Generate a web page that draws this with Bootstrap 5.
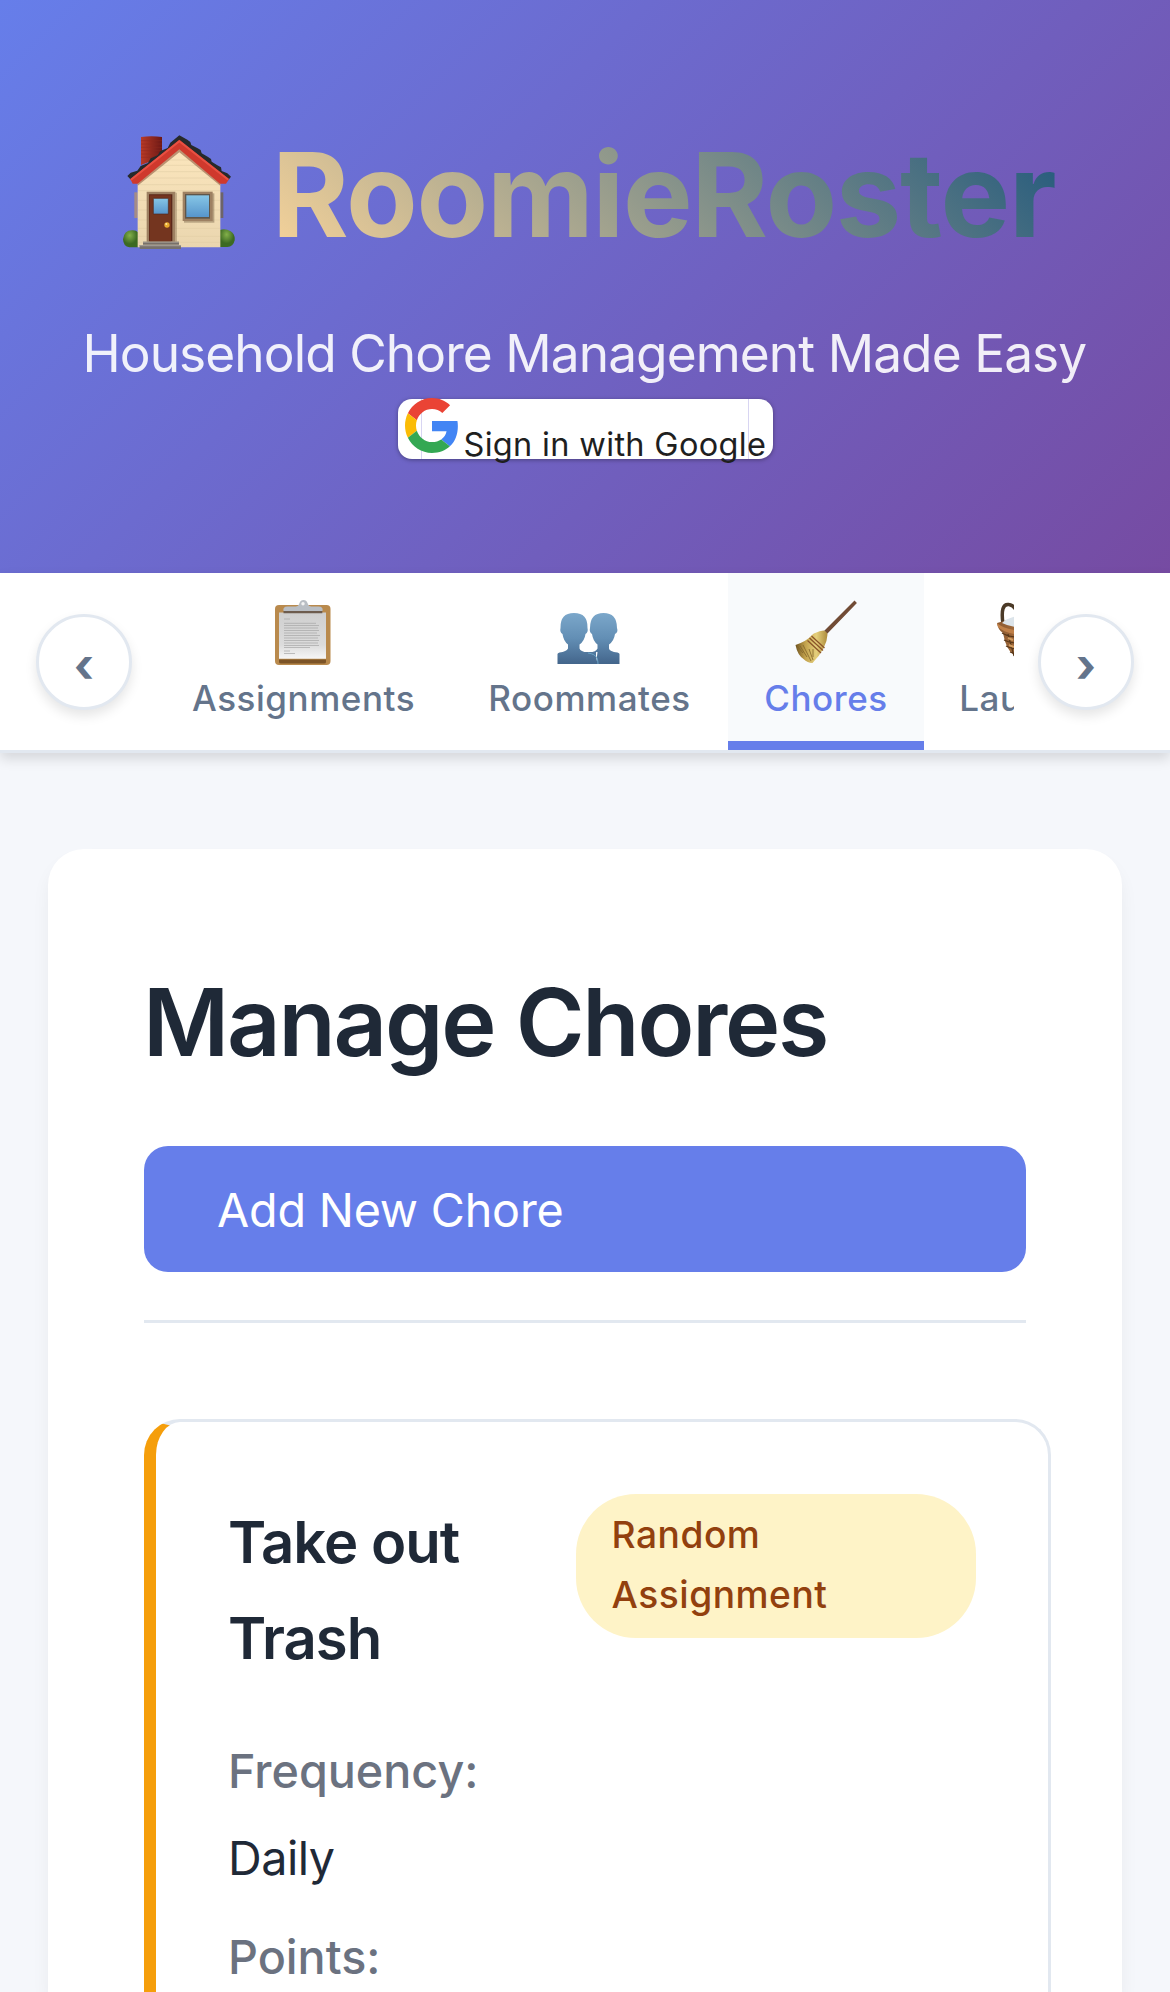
<!DOCTYPE html>
<html lang="en">
<head>
<meta charset="utf-8">
<meta name="viewport" content="width=device-width, initial-scale=1">
<title>RoomieRoster</title>
<link href="https://cdn.jsdelivr.net/npm/bootstrap@5.3.0/dist/css/bootstrap.min.css" rel="stylesheet">
<style>
html, body { height: 1992px; overflow: hidden; }
body { background: #f5f7fb; color: #1f2937; font-family: Inter, "Liberation Sans", sans-serif; font-size: 46.7px; line-height: 76px; }
.app-header { height: 573px; padding-top: 99px; background: linear-gradient(135deg, #667eea 0%, #764ba2 100%); }
.brand { gap: 37px; padding-left: 123px; font-size: 117px; font-weight: 700; line-height: 192px; letter-spacing: -1.3px; white-space: nowrap; }
.brand svg { width: 112px; height: 114px; margin-top: -6px; }
.brand-name { background: linear-gradient(45deg, #ffd89b, #19547b); -webkit-background-clip: text; background-clip: text; color: transparent; }
.tagline { margin-top: 20px; padding-left: 82.5px; font-size: 51.4px; line-height: 84px; letter-spacing: -.93px; color: rgba(255,255,255,.9); white-space: nowrap; }
.signin { width: 375px; height: 60px; margin: 4px 0 0 397.5px; padding-left: 7px; border-radius: 14px; background: linear-gradient(#d8d5f2,#d8d5f2) 23.5px 0/1px 100% no-repeat, linear-gradient(#d8d5f2,#d8d5f2) 350.5px 0/1px 100% no-repeat, #fff; box-shadow: 0 1px 4px rgba(0,0,0,.35); color: #1f1f1f; font-size: 32.5px; line-height: 40px; letter-spacing: .32px; white-space: nowrap; }
.signin svg { width: 54px; height: 55px; margin-top: -1px; flex: none; }
.signin span { margin: 26px 0 0 5px; }
.tabbar { height: 180px; padding: 0 36px; background: #fff; border-bottom: 3px solid #e2e8f0; box-shadow: 0 6px 12px rgba(0,0,0,.13); }
.scroll-btn { width: 96px; height: 96px; flex: none; margin-top: 41px; padding: 6px 0 0; border: 3px solid #e2e8f0; border-radius: 50%; background: #fff; color: #64748b; font-size: 47px; font-weight: 700; line-height: 84px; text-align: center; box-shadow: 0 6px 12px rgba(0,0,0,.1); }
.tabs { width: 858px; margin: 0 24px; overflow: hidden; flex: none; }
.tab-item { flex: none; height: 177px; padding-top: 27px; border-bottom: 9px solid transparent; color: #64748b; font-size: 35px; font-weight: 500; line-height: 50px; letter-spacing: .55px; text-decoration: none; }
.tab-item svg { width: 66px; height: 66px; margin: 0 2px 7px 0; }
.tab-item.current { background: #f8fafc; border-color: #667eea; color: #667eea; }
.page { padding: 96px 48px; }
.panel { height: 1143px; padding: 96px; border-radius: 36px 36px 0 0; background: #fff; box-shadow: 0 12px 18px rgba(0,0,0,.05); }
.panel h2 { margin: 0 0 47px -1px; font-size: 93.5px; font-weight: 600; line-height: 154px; letter-spacing: -2.21px; }
.add-btn { width: 882px; height: 126px; padding: 2px 73px 0; border-radius: 24px; background: #667eea; color: #fff; letter-spacing: -.2px; }
.rule { height: 3px; margin: 48px 0 96px; background: #e2e8f0; }
.chore { width: 907px; height: 573px; padding: 72px 72px 0; border: 3px solid #e2e8f0; border-left: 12px solid #f59e0b; border-bottom: 0; border-radius: 36px 36px 0 0; }
.chore h3 { width: 280px; margin: 0; font-size: 58px; font-weight: 600; line-height: 96px; letter-spacing: -1px; }
.kind { width: 400px; height: 144px; padding: 11px 35.5px; border-radius: 60px; background: #fef3c7; color: #92400e; font-size: 37.2px; font-weight: 500; line-height: 60px; letter-spacing: .5px; }
.label-text { color: #6b7280; font-weight: 500; }
</style>
<script src="https://cdn.jsdelivr.net/npm/bootstrap@5.3.0/dist/js/bootstrap.bundle.min.js"></script>
</head>
<body>
<header class="app-header">
  <h1 class="brand d-flex align-items-center m-0">
    <svg viewBox="39 45 336 342" aria-hidden="true">
      <defs>
        <linearGradient id="wall" x2="0" y2="1"><stop stop-color="#fce6bd"/><stop offset="1" stop-color="#ead6af"/></linearGradient>
        <linearGradient id="brick"><stop stop-color="#b93a27"/><stop offset="1" stop-color="#6c1815"/></linearGradient>
        <linearGradient id="glass" x2="0" y2="1"><stop stop-color="#86c6e6"/><stop offset="1" stop-color="#5795cb"/></linearGradient>
        <radialGradient id="bush" cx=".45" cy=".3"><stop stop-color="#83b04a"/><stop offset="1" stop-color="#3c6a22"/></radialGradient>
      </defs>
      <path d="M39 358q3-27 27-27 12-1 18 6v45H58q-18-2-19-24z" fill="url(#bush)"/>
      <path d="M330 330q16-6 32 4 14 10 12 27-4 20-22 20h-22z" fill="url(#bush)"/>
      <path d="M73 217h10v77H73z" fill="#a58c86"/><path d="M331 217h9v77h-9z" fill="#6d6468"/>
      <path d="M93 51q32-4 63 0v60l-63 24z" fill="url(#brick)"/>
      <path d="M93 62h63M93 72h63M93 82h63M93 92h63M93 102h60M93 112h50" stroke="#8e2a1f" stroke-width="1.5"/>
      <path d="M83 382V170L208 75l123 95v212z" fill="url(#wall)"/>
      <path d="M170 120h80M150 136h116M125 155h165M105 174h205M84 194h246M84 212h246M84 241h246M84 270h246M84 300h246M84 325h246M84 349h246M84 367h246" stroke="#dfcaa3" stroke-width="1.5"/>
      <path d="M83 197L208 97l123 100v-22L208 80 83 175z" fill="#9a674c" opacity=".65"/>
      <path d="M52 168L62 158 82 152 92 138 114 129 122 115 143 106 151 93 173 84 181 68 208 46 232 59 241 66 244 75 263 85 272 90 275 100 293 110 303 117 305 125 322 136 333 142 335 153 352 160 363 170 352 184 208 70 66 183z" fill="#272a2b"/>
      <path d="M61 177L208 59 357 177 348 191 330 191 208 88 83 191H68z" fill="#cf392d"/>
      <path d="M62 180L208 64l147 115" fill="none" stroke="#e95042" stroke-width="6"/>
      <path d="M110 215h86v150h-86z" fill="#9d8062"/><path d="M196 218h5v147h-5z" fill="#9c8666" opacity=".5"/><path d="M117 223h70v141h-70z" fill="#5b2719"/><path d="M119 226h64v138h-64z" fill="#74351f"/>
      <path d="M130 235h45v47h-45z" fill="url(#glass)" stroke="#4e291e" stroke-width="2"/><circle cx="171" cy="315" r="8" fill="#e9aa2f"/><circle cx="169" cy="312" r="3" fill="#ffe69a"/>
      <path d="M222 220h91v88h-91z" fill="#80694e" opacity=".5"/><path d="M218 215h90v88h-90z" fill="#9d8062"/><path d="M225 222h75v74h-75z" fill="#5f564a"/><path d="M229 226h68v65h-68z" fill="url(#glass)"/>
      <path d="M99 365h108v9H99z" fill="#77706a"/><path d="M99 365h108v3H99z" fill="#a29b90"/><path d="M89 375h124v12H89z" fill="#77716c"/><path d="M89 375h124v4H89z" fill="#9e9992"/>
    </svg>
    <span class="brand-name">RoomieRoster</span>
  </h1>
  <p class="tagline mb-0">Household Chore Management Made Easy</p>
  <div class="signin d-flex align-items-start">
    <svg viewBox="0 0 48 48" preserveAspectRatio="none" aria-hidden="true">
      <path fill="#EA4335" d="M24 9.5c3.54 0 6.71 1.22 9.21 3.6l6.85-6.85C35.9 2.38 30.47 0 24 0 14.62 0 6.51 5.38 2.56 13.22l7.98 6.19C12.43 13.72 17.74 9.5 24 9.5z"/>
      <path fill="#4285F4" d="M46.98 24.55c0-1.57-.15-3.09-.38-4.55H24v9.02h12.94c-.58 2.96-2.26 5.48-4.78 7.18l7.73 6c4.51-4.18 7.09-10.36 7.09-17.65z"/>
      <path fill="#FBBC05" d="M10.53 28.59c-.48-1.45-.76-2.99-.76-4.59s.27-3.14.76-4.59l-7.98-6.19C.92 16.46 0 20.12 0 24c0 3.88.92 7.54 2.56 10.78l7.97-6.19z"/>
      <path fill="#34A853" d="M24 48c6.48 0 11.93-2.13 15.89-5.81l-7.73-6c-2.15 1.45-4.92 2.3-8.16 2.3-6.26 0-11.57-4.22-13.47-9.91l-7.98 6.19C6.51 42.62 14.62 48 24 48z"/>
    </svg>
    <span>Sign in with Google</span>
  </div>
</header>

<nav class="tabbar d-flex">
  <button class="scroll-btn" type="button">‹</button>
  <div class="tabs d-flex">
    <a class="tab-item d-flex flex-column align-items-center" href="#" style="width:295px">
      <svg viewBox="0 0 66 66" aria-hidden="true">
        <defs><linearGradient id="sheet" x2="0" y2="1"><stop stop-color="#cfcfcf"/><stop offset=".7" stop-color="#dcdcdc"/><stop offset="1" stop-color="#f6f6f6"/></linearGradient></defs>
        <rect x="5" y="5" width="55.500" height="60" rx="4" fill="#b98a4d"/>
        <path d="M9 59.500h47V62q0 1.500-2 1.500H11q-2 0-2-1.500z" fill="#7c5427"/>
        <path d="M9 12.500h47v46.200H9z" fill="url(#sheet)"/>
        <path d="M13.500 11q-1-4.500 4-4.500h8q3 0 4-3.500 1-3 4-3t4 3q1 3.500 4 3.500h7q5 0 4 4.500z" fill="#b9bec4"/>
        <path d="M13.500 11h38.800v2.200H13.500z" fill="#6d5c4e"/><circle cx="33" cy="3.800" r="1.700" fill="#f3f3f3"/>
        <path d="M14 19h6M14 23.300h32M14 25.500h35M14 28h34M14 30.500h35M14 33h33M14 35.500h36M14 38h34M14 40.500h35M14 43h34M14 45.500h35M14 47.500h26M14 51h6M14 53.500h11" stroke="#a6a6a6" stroke-width=".7"/>
      </svg>
      <span>Assignments</span>
    </a>
    <a class="tab-item d-flex flex-column align-items-center" href="#" style="width:277px">
      <svg viewBox="0 0 66 66" aria-hidden="true">
        <defs><linearGradient id="folk" gradientUnits="userSpaceOnUse" x1="0" y1="12" x2="0" y2="64"><stop stop-color="#7ca8cb"/><stop offset=".5" stop-color="#638fb5"/><stop offset="1" stop-color="#43658b"/></linearGradient></defs>
        <g fill="url(#folk)">
          <path d="M1.500 64V54q0-1 2-1.500 7-1 8.500-4v-4Q7.500 41 6.500 34q-3-2-2-6Q4 13 18 13T31.500 28q1 4-2 6-1 7-6 10.500v4q1 3 8 4h6V64z"/>
          <path d="M41.500 52q-1 12.500-4 12H63.500V54q0-1-2-1.500-8-1-8.500-4v-4Q58 41 59 34q3.500-2 2-6Q61 13 47.500 13T34 28q-1 4 2 6 1 7 5.500 10.500v4q-1.500 3.500-8 4z"/>
          <path d="M26 52h14v12H26z"/>
        </g>
        <path d="M32 53q7 1 9 5 1 3 1 6" fill="none" stroke="#6ba4c7"/>
      </svg>
      <span>Roommates</span>
    </a>
    <a class="tab-item current d-flex flex-column align-items-center" href="#" style="width:196px">
      <svg viewBox="0 0 66 66" aria-hidden="true">
        <defs><linearGradient id="straw"><stop stop-color="#6f5320"/><stop offset=".3" stop-color="#c2a14b"/><stop offset=".65" stop-color="#e5cf7c"/><stop offset="1" stop-color="#ad8b3a"/></linearGradient></defs>
        <path d="M32 32L62.500 1.500 64 3 34 34z" fill="#714b35" stroke="#714b35" stroke-width="1.300"/>
        <path d="M31.500 30.500q3 .5 4 4Q35 48 20.500 63q-5 0-9-4-6-4-8-14Q15 41 20 35q3-3 11.500-4.500z" fill="url(#straw)"/>
        <path d="M6 47l5 6M8 46l7 11M11 45l8 16M17 49l4 11M21 49v8" stroke="#80632a" stroke-width=".8"/>
        <path d="M15.500 40.500L29 53M17.500 38L31 50.500M19.500 36L32.500 48" stroke="#8b5429" stroke-width="1.300"/>
      </svg>
      <span>Chores</span>
    </a>
    <a class="tab-item d-flex flex-column align-items-center" href="#" style="width:212px">
      <svg viewBox="0 0 66 66" aria-hidden="true">
        <defs><linearGradient id="wick"><stop stop-color="#8b5a31"/><stop offset=".5" stop-color="#b07340"/><stop offset="1" stop-color="#8b5a31"/></linearGradient></defs>
        <path d="M7 24Q4 3 13 4.500q7 1 9 12M59 24Q62 3 53 4.500q-7 1-9 12" fill="none" stroke="#4b3a27" stroke-width="3.500"/>
        <path d="M1 23l32-9 32 9q-2 7-5 10-2 17-10 22-15 7-32 0Q10 50 7 33q-5-3-6-10z" fill="url(#wick)"/>
        <path d="M6 23q8-8 27-8t27 8q-10 5-27 5T6 23z" fill="#dce4ea"/>
        <path d="M1 23q8 8 32 8t32-8l-1 4q-8 8-31 8T2 27z" fill="#c08048"/>
        <path d="M6 33q8 5 27 5M8 40q8 4 25 4M10 46q8 4 23 4M14 52q8 3 19 3M12 34l6 22M19 36l3 20M26 37l1 20" fill="none" stroke="#573719" stroke-width="1.200"/>
        <path d="M12 38l5 2M20 42l5 1M13 45l5 2M21 48l4 1" stroke="#d29c60" stroke-width="2"/>
      </svg>
      <span>Laundry</span>
    </a>
  </div>
  <button class="scroll-btn" type="button">›</button>
</nav>

<main class="page pb-0">
  <section class="panel pb-0">
    <h2>Manage Chores</h2>
    <div class="add-btn d-flex align-items-center">Add New Chore</div>
    <div class="rule"></div>
    <article class="chore">
      <div class="d-flex justify-content-between align-items-start">
        <h3>Take out Trash</h3>
        <div class="kind">Random<br>Assignment</div>
      </div>
      <div class="label-text" style="margin-top:47px">Frequency:</div>
      <div style="margin-top:11px;letter-spacing:-.5px">Daily</div>
      <div class="label-text" style="margin-top:23px">Points:</div>
    </article>
  </section>
</main>
</body>
</html>
